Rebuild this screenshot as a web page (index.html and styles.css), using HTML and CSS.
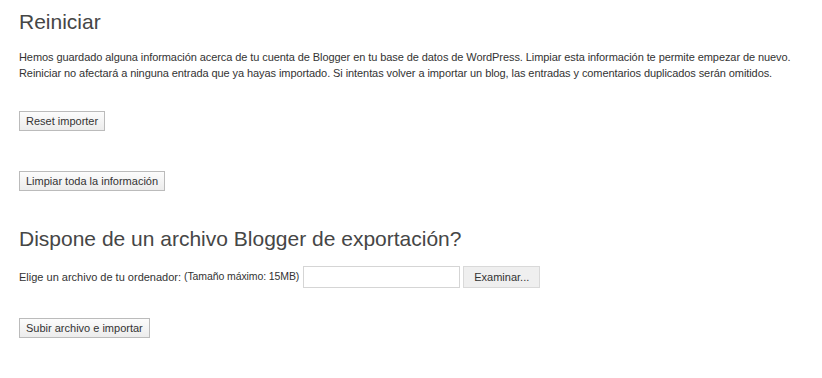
FILE: index.html
```html
<!DOCTYPE html>
<html lang="es">
<head>
  <meta charset="UTF-8" />
  <meta name="viewport" content="width=device-width, initial-scale=1.0" />
  <title>Importar Blogger</title>
  <link rel="stylesheet" href="styles.css">
</head>
<body>

  <!-- REINICIAR -->
  <section class="bloque">
    <h2>Reiniciar</h2>
    <p class="texto">Hemos guardado alguna información acerca de tu cuenta de Blogger en tu base de datos de WordPress. Limpiar esta información te permite empezar de nuevo. Reiniciar no afectará a ninguna entrada que ya hayas importado. Si intentas volver a importar un blog, las entradas y comentarios duplicados serán omitidos.</p>

    <form class="accion">
      <button type="button" class="boton">Reset importer</button>
    </form>

    <form class="accion segunda">
      <button type="button" class="boton">Limpiar toda la información</button>
    </form>
  </section>

  <!-- SUBIR ARCHIVO -->
  <section class="bloque">
    <h2>Dispone de un archivo Blogger de exportación?</h2>

    <form class="subida">
      <div class="fila-archivo">
        <label class="etiqueta">Elige un archivo de tu ordenador:</label>
        <span class="limite">(Tamaño máximo: 15MB)</span>
        <span class="archivo">
          <input type="text" class="archivo-ruta" readonly />
          <button type="button" class="boton examinar">Examinar...</button>
        </span>
      </div>
      <div class="accion">
        <button type="button" class="boton">Subir archivo e importar</button>
      </div>
    </form>
  </section>

</body>
</html>
```

FILE: styles.css
```css
* {
  box-sizing: border-box;
  margin: 0;
  padding: 0;
}

body {
  font-family: 'Liberation Sans', Arial, sans-serif;
  font-size: 11px;
  color: #333;
  background: #fff;
  padding: 7px 19px 0 19px;
}

h2 {
  font-size: 21px;
  font-weight: normal;
  line-height: 29px;
  color: #464646;
}

.texto {
  margin-top: 13px;
  line-height: 16px;
  max-width: 790px;
  letter-spacing: -0.08px;
}

.accion {
  margin-top: 30px;
}

.accion.segunda {
  margin-top: 40px;
}

.bloque + .bloque {
  margin-top: 33px;
}

.boton {
  font-family: 'Liberation Sans', Arial, sans-serif;
  font-size: 11px;
  color: #333;
  height: 20px;
  padding: 0 6px;
  border: 1px solid #bbb;
  background: linear-gradient(to bottom, #fcfcfc, #ececec);
  cursor: pointer;
}

.subida {
  margin-top: 13px;
}

.fila-archivo {
  display: flex;
  align-items: center;
}

.limite {
  margin-left: 3px;
  margin-top: -3px;
  font-size: 10.5px;
  letter-spacing: -0.1px;
}

.archivo {
  display: flex;
  margin-left: 4px;
  gap: 3px;
}

.archivo-ruta {
  width: 157px;
  height: 22px;
  border: 1px solid #d5d5d5;
  background: #fff;
}

.examinar {
  width: 77px;
  height: 22px;
  border-color: #d9d9d9;
  background: #efefef;
}

.subida .accion {
  margin-top: 30px;
}
```
